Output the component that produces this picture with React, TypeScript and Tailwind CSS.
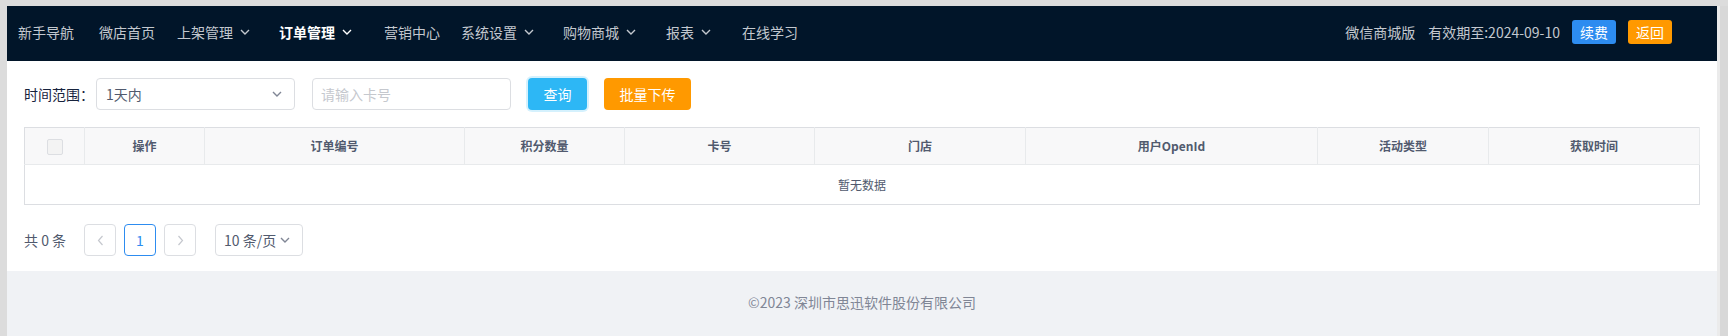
import React from 'react'

const navItems = [
  { label: '新手导航', w: 'w-[81px]' },
  { label: '微店首页', w: 'w-[78px]' },
  { label: '上架管理', w: 'w-[102px]', drop: true },
  { label: '订单管理', w: 'w-[105px]', drop: true, active: true },
  { label: '营销中心', w: 'w-[77px]' },
  { label: '系统设置', w: 'w-[102px]', drop: true },
  { label: '购物商城', w: 'w-[103px]', drop: true },
  { label: '报表', w: 'w-[76px]', drop: true },
  { label: '在线学习', w: 'w-[80px]' },
]

const columns = [
  { title: '', w: 'w-[60px]' },
  { title: '操作', w: 'w-[120px]' },
  { title: '订单编号', w: 'w-[260px]' },
  { title: '积分数量', w: 'w-[160px]' },
  { title: '卡号', w: 'w-[190px]' },
  { title: '门店', w: 'w-[211px]' },
  { title: '用户OpenId', w: 'w-[292px]' },
  { title: '活动类型', w: 'w-[171px]' },
  { title: '获取时间', w: 'w-[211px]' },
]

function Chevron({ className = '' }: { className?: string }) {
  return (
    <svg width="10" height="6" viewBox="0 0 10 6" className={className}>
      <path d="M1 1l4 4 4-4" stroke="currentColor" strokeWidth="1.4" fill="none" />
    </svg>
  )
}

function Arrow({ dir }: { dir: 'left' | 'right' }) {
  return (
    <svg width="7" height="11" viewBox="0 0 7 11">
      <path
        d={dir === 'left' ? 'M5.5 1L1.5 5.5l4 4.5' : 'M1.5 1l4 4.5-4 4.5'}
        stroke="currentColor"
        strokeWidth="1.2"
        fill="none"
      />
    </svg>
  )
}

export default function App() {
  return (
    <div
      className="h-[336px] w-[1728px] bg-[#dcdcdc] pt-[6px] pl-[7px] flex"
      style={{ fontFamily: '"Noto Sans CJK SC", "Liberation Sans", sans-serif' }}
    >
      <div className="flex-1 flex flex-col">
        {/* top bar */}
        <nav className="h-[55px] bg-[#011529] flex items-center pl-[11px] pr-[45px] pb-[3px] text-[14px] text-[#c3c8cf]">
          {navItems.map((n) => (
            <div key={n.label} className={`${n.w} flex items-center shrink-0`}>
              <span className={n.active ? 'text-white font-bold' : ''}>{n.label}</span>
              {n.drop && (
                <Chevron className={`ml-[7px] ${n.active ? 'text-white' : ''}`} />
              )}
            </div>
          ))}
          <div className="ml-auto flex items-center">
            <span>微信商城版</span>
            <span className="ml-[13px]">有效期至:2024-09-10</span>
            <button className="ml-[12px] w-[44px] h-[24px] rounded-[3px] bg-[#2d8cf0] text-white text-[14px] leading-[24px]">
              续费
            </button>
            <button className="ml-[12px] w-[44px] h-[24px] rounded-[3px] bg-[#ff9900] text-white text-[14px] leading-[24px]">
              返回
            </button>
          </div>
        </nav>

        {/* content */}
        <div className="h-[210px] bg-white px-[17px] pt-[17px] text-[#515a6e]">
          <div className="flex items-center h-[32px] text-[14px]">
            <span className="w-[72px] text-[#17233d]">时间范围：</span>
            <div className="w-[199px] h-[32px] border border-[#dcdee2] rounded-[4px] flex items-center pl-[9px] pr-[12px]">
              <span className="text-[#515a6e]">1天内</span>
              <Chevron className="ml-auto text-[#808695]" />
            </div>
            <div className="ml-[17px] w-[199px] h-[32px] border border-[#dcdee2] rounded-[4px] flex items-center pl-[8px] text-[#c5c8ce]">
              请输入卡号
            </div>
            <button className="ml-[17px] w-[59px] h-[32px] rounded-[4px] bg-[#2db7f5] text-white shadow-[0_0_0_2px_rgba(45,183,245,0.2)]">
              查询
            </button>
            <button className="ml-[17px] w-[87px] h-[32px] rounded-[4px] bg-[#ff9900] text-white">
              批量下传
            </button>
          </div>

          <table className="mt-[17px] w-[1675px] table-fixed border-collapse border border-[#dcdee2] text-[12px]">
            <colgroup>
              {columns.map((c, i) => (
                <col key={i} className={c.w} />
              ))}
            </colgroup>
            <thead>
              <tr className="h-[37px] bg-[#f8f8f9]">
                {columns.map((c, i) => (
                  <th
                    key={i}
                    className="border-r border-b border-[#e8eaec] font-bold text-[#515a6e] text-center"
                  >
                    {i === 0 ? (
                      <span className="inline-block w-[16px] h-[16px] align-middle border border-[#dcdee2] bg-[#f3f3f3] rounded-[2px]" />
                    ) : (
                      c.title
                    )}
                  </th>
                ))}
              </tr>
            </thead>
            <tbody>
              <tr className="h-[40px]">
                <td colSpan={9} className="text-center text-[#515a6e]">
                  暂无数据
                </td>
              </tr>
            </tbody>
          </table>

          <div className="mt-[19px] flex items-center h-[32px] text-[14px]">
            <span className="w-[60px] text-[#515a6e]">共 0 条</span>
            <div className="w-[32px] h-[32px] border border-[#dcdee2] rounded-[4px] flex items-center justify-center text-[#c5c8ce]">
              <Arrow dir="left" />
            </div>
            <div className="ml-[8px] w-[32px] h-[32px] border border-[#2d8cf0] rounded-[4px] flex items-center justify-center text-[#2d8cf0]">
              1
            </div>
            <div className="ml-[8px] w-[32px] h-[32px] border border-[#dcdee2] rounded-[4px] flex items-center justify-center text-[#c5c8ce]">
              <Arrow dir="right" />
            </div>
            <div className="ml-[19px] w-[88px] h-[32px] border border-[#dcdee2] rounded-[4px] flex items-center pl-[8px] text-[#515a6e]">
              <span>10 条/页</span>
              <Chevron className="ml-[4px] text-[#808695]" />
            </div>
          </div>
        </div>

        {/* footer */}
        <footer className="flex-1 bg-[#f0f2f5] flex items-center justify-center pb-[2px] text-[14px] text-[#808695]">
          ©2023 深圳市思迅软件股份有限公司
        </footer>
      </div>
      <div className="w-[11px] border-l-[3px] border-[#ebebeb] bg-[#d8d8d8]" />
    </div>
  )
}
